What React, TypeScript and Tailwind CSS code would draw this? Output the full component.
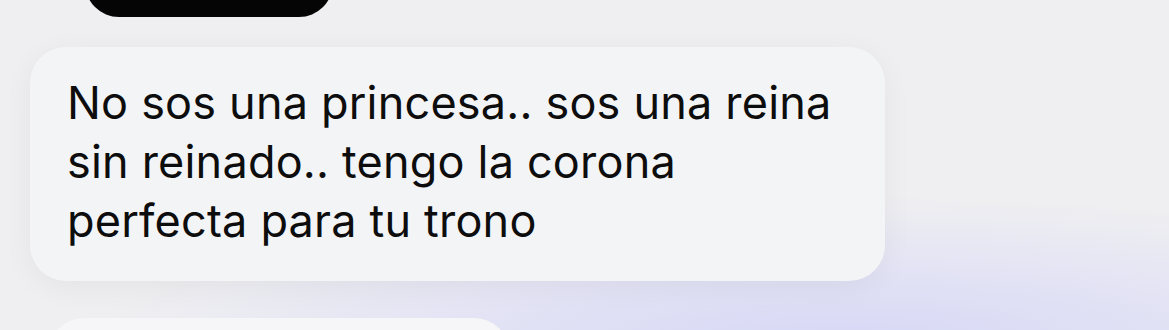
export default function App() {
  return (
    <div className="relative w-[1169px] h-[330px] overflow-hidden bg-[#efeff1]">
      <div className="absolute inset-0 bg-[radial-gradient(ellipse_65%_45%_at_72%_104%,#d6d7f5_0%,rgba(224,224,246,0.8)_50%,rgba(239,239,241,0)_100%)]" />
      <div className="relative flex flex-col">
        <div className="ml-[85px] mt-[-183px] h-[200px] w-[248px] rounded-[34px] bg-[#050505]" />
        <div className="ml-[30px] mt-[30px] w-[855px] h-[234px] rounded-[36px] bg-[#f3f4f6] pl-[37px] pt-[26px] shadow-[0_6px_30px_rgba(0,0,0,0.05)]">
          <p
            className="text-[45px] leading-[59px] text-[#0d0d0d] tracking-[0.2px]"
            style={{ fontFamily: "Inter, 'Noto Sans', sans-serif" }}
          >
            No sos una princesa.. sos una reina
            <br />
            sin reinado.. tengo la corona
            <br />
            perfecta para tu trono
          </p>
        </div>
        <div className="ml-[48px] mt-[37px] w-[462px] h-[80px] rounded-[36px] bg-[#f6f6f8]" />
      </div>
    </div>
  );
}
